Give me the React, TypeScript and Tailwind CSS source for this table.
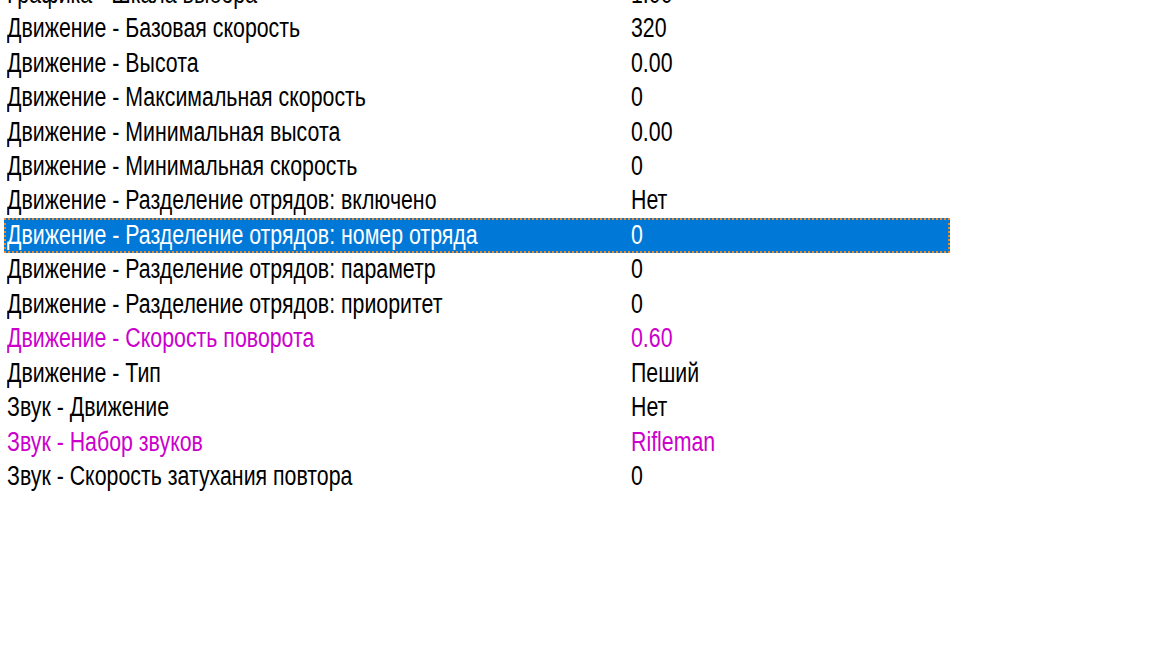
import React from "react";

type Row = { name: string; value: string; color?: "magenta"; selected?: boolean };

const rows: Row[] = [
  { name: "Графика - Шкала выбора", value: "1.00" },
  { name: "Движение - Базовая скорость", value: "320" },
  { name: "Движение - Высота", value: "0.00" },
  { name: "Движение - Максимальная скорость", value: "0" },
  { name: "Движение - Минимальная высота", value: "0.00" },
  { name: "Движение - Минимальная скорость", value: "0" },
  { name: "Движение - Разделение отрядов: включено", value: "Нет" },
  { name: "Движение - Разделение отрядов: номер отряда", value: "0", selected: true },
  { name: "Движение - Разделение отрядов: параметр", value: "0" },
  { name: "Движение - Разделение отрядов: приоритет", value: "0" },
  { name: "Движение - Скорость поворота", value: "0.60", color: "magenta" },
  { name: "Движение - Тип", value: "Пеший" },
  { name: "Звук - Движение", value: "Нет" },
  { name: "Звук - Набор звуков", value: "Rifleman", color: "magenta" },
  { name: "Звук - Скорость затухания повтора", value: "0" },
];

export default function App() {
  return (
    <div
      className="w-[1152px] h-[648px] overflow-hidden bg-white"
      style={{ fontFamily: '"Liberation Sans", Arial, sans-serif' }}
    >
      <div className="-mt-[23px] ml-[4px] w-[946px] flex flex-col">
        {rows.map((r, i) => {
          const color = r.selected
            ? "text-white"
            : r.color === "magenta"
            ? "text-[#cc00cc]"
            : "text-black";
          return (
            <div
              key={i}
              className={
                "h-[34.46px] flex items-center text-[27px] leading-none " +
                color +
                (r.selected
                  ? " bg-[#0078d7] outline-2 outline-dotted -outline-offset-2 outline-[#f08a24]"
                  : "")
              }
            >
              <div className="w-[627px] pl-[3px] whitespace-nowrap">
                <span className="inline-block origin-left scale-x-[0.79]">{r.name}</span>
              </div>
              <div className="whitespace-nowrap">
                <span className="inline-block origin-left scale-x-[0.79]">{r.value}</span>
              </div>
            </div>
          );
        })}
      </div>
    </div>
  );
}
